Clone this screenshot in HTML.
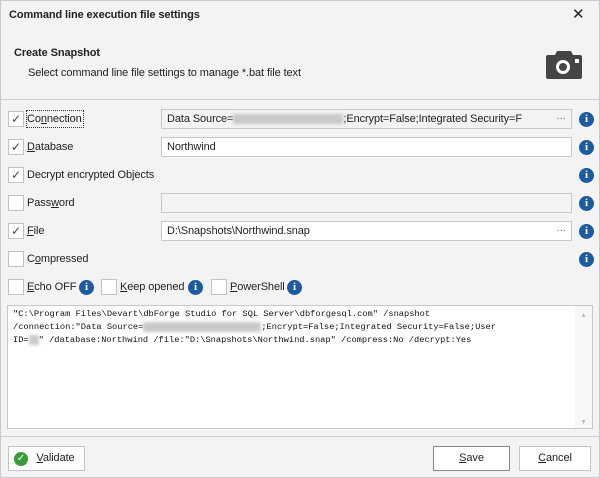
<!DOCTYPE html><html><head><meta charset="utf-8"><style>
*{box-sizing:border-box;margin:0;padding:0}
body{width:600px;height:478px;background:#f3f3f3;font-family:"Liberation Sans",sans-serif;font-size:11px;letter-spacing:-0.1px;color:#222;position:relative;overflow:hidden}
.a{position:absolute}
.cb{position:absolute;left:8px;width:16px;height:16px;border:1px solid #c3c3c3;background:#fff;font-size:12px;line-height:14px;text-align:center;color:#444}
.lb{position:absolute;left:27px;line-height:16px}
.in{position:absolute;left:161px;width:411px;height:20px;border:1px solid #c8c8c8;background:#fff;padding-left:5px;line-height:18px;white-space:nowrap;overflow:hidden}
.dots{position:absolute;right:5px;top:0;color:#555;font-size:10px;background:inherit;padding-left:3px}
.i{position:absolute;width:15px;height:15px;border-radius:50%;background:#1d5ba0;color:#fff;font-weight:bold;font-size:11px;line-height:15px;text-align:center;font-family:"Liberation Serif",serif;letter-spacing:0}
.blur{display:inline-block;height:10px;background:#c9c9c9;filter:blur(1.5px);vertical-align:middle}
.btn{position:absolute;top:446px;height:25px;border:1px solid #c4c4c4;background:#fff;text-align:center;line-height:23px}
</style></head><body>
<div class="a" style="left:0;top:0;width:600px;height:478px;border:1px solid #c8c8cf;pointer-events:none"></div>
<div class="a" style="left:9px;top:9px;font-weight:bold">Command line execution file settings</div>
<div class="a" style="left:572px;top:5px;font-size:15px">✕</div>
<div class="a" style="left:14px;top:47px;font-weight:bold">Create Snapshot</div>
<div class="a" style="left:28px;top:67px">Select command line file settings to manage *.bat file text</div>
<svg class="a" style="left:546px;top:49px" width="36" height="32" viewBox="0 0 36 32"><path d="M11 2h14l2 4h7a2 2 0 0 1 2 2v20a2 2 0 0 1-2 2H2a2 2 0 0 1-2-2V8a2 2 0 0 1 2-2h7z" fill="#454545"/><circle cx="17" cy="18" r="7" fill="#fff"/><circle cx="17" cy="18" r="4" fill="#454545"/><rect x="29" y="10" width="4" height="4" fill="#fff"/></svg>
<div class="a" style="left:0;top:99px;width:600px;height:1px;background:#d0d0d8"></div>

<div class="cb" style="top:111px">✓</div><div class="lb" style="top:111px;outline:1px dotted #333;padding-right:1px">Co<u>n</u>nection</div>
<div class="in" style="top:109px;background:#f3f3f3">Data Source=<span class="blur" style="width:110px"></span>;Encrypt=False;Integrated Security=F<span class="dots">···</span></div>
<div class="i" style="left:579px;top:112px">i</div>

<div class="cb" style="top:139px">✓</div><div class="lb" style="top:139px"><u>D</u>atabase</div>
<div class="in" style="top:137px">Northwind</div>
<div class="i" style="left:579px;top:140px">i</div>

<div class="cb" style="top:167px">✓</div><div class="lb" style="top:167px">Decrypt encrypted Objects</div>
<div class="i" style="left:579px;top:168px">i</div>

<div class="cb" style="top:195px"></div><div class="lb" style="top:195px">Pass<u>w</u>ord</div>
<div class="in" style="top:193px;background:#f3f3f3"></div>
<div class="i" style="left:579px;top:196px">i</div>

<div class="cb" style="top:223px">✓</div><div class="lb" style="top:223px"><u>F</u>ile</div>
<div class="in" style="top:221px">D:\Snapshots\Northwind.snap<span class="dots">···</span></div>
<div class="i" style="left:579px;top:224px">i</div>

<div class="cb" style="top:251px"></div><div class="lb" style="top:251px">C<u>o</u>mpressed</div>
<div class="i" style="left:579px;top:252px">i</div>

<div class="cb" style="top:279px"></div><div class="lb" style="top:279px"><u>E</u>cho OFF</div>
<div class="i" style="left:79px;top:280px">i</div>
<div class="cb" style="top:279px;left:101px"></div><div class="lb" style="top:279px;left:120px"><u>K</u>eep opened</div>
<div class="i" style="left:188px;top:280px">i</div>
<div class="cb" style="top:279px;left:211px"></div><div class="lb" style="top:279px;left:230px"><u>P</u>owerShell</div>
<div class="i" style="left:287px;top:280px">i</div>

<div class="a" style="left:7px;top:305px;width:586px;height:124px;background:#fff;border:1px solid #c8c8c8;font-family:'Liberation Mono',monospace;font-size:8.7px;letter-spacing:0;line-height:13px;padding:2px 5px;white-space:pre;color:#111">"C:\Program Files\Devart\dbForge Studio for SQL Server\dbforgesql.com" /snapshot
/connection:"Data Source=<span class="blur" style="width:118px"></span>;Encrypt=False;Integrated Security=False;User
ID=<span class="blur" style="width:10px"></span>" /database:Northwind /file:"D:\Snapshots\Northwind.snap" /compress:No /decrypt:Yes</div>
<div class="a" style="left:575px;top:306px;width:17px;height:122px;background:#f7f7f7;color:#bbb;font-size:7px;text-align:center;line-height:10px;padding-top:5px">▲<div style="margin-top:97px">▼</div></div>
<div class="a" style="left:0;top:436px;width:600px;height:1px;background:#d0d0d8"></div>

<div class="btn" style="left:8px;width:77px"><span style="position:absolute;left:5px;top:5px;width:14px;height:14px;border-radius:50%;background:#3a9b3a;color:#fff;font-size:10px;line-height:14px">✓</span><span style="margin-left:18px"><u>V</u>alidate</span></div>
<div class="btn" style="left:433px;width:77px;border-color:#888"><u>S</u>ave</div>
<div class="btn" style="left:519px;width:72px"><u>C</u>ancel</div>
</body></html>
